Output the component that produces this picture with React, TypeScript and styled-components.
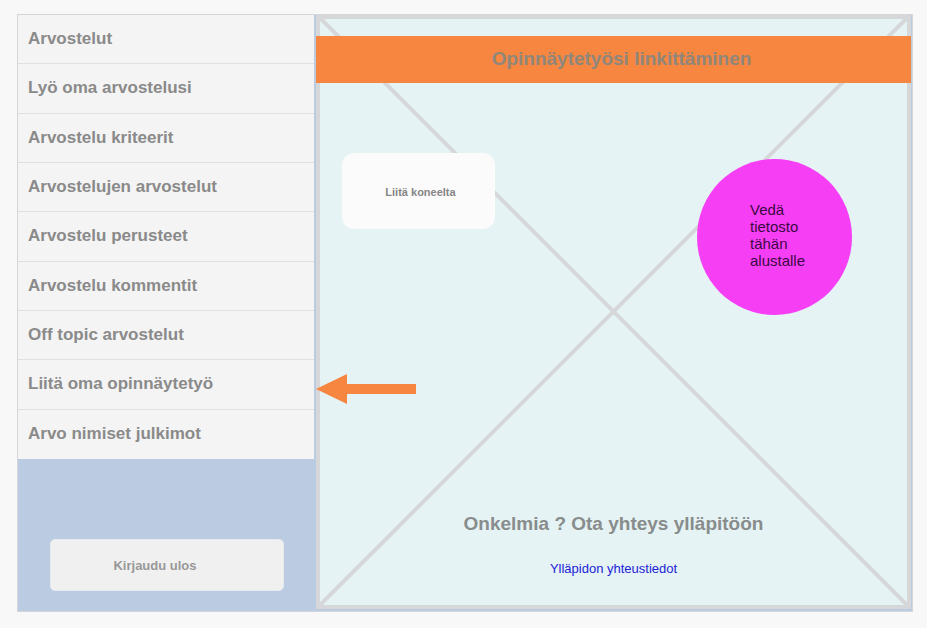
import React from "react";
import styled, { createGlobalStyle } from "styled-components";

const GlobalStyle = createGlobalStyle`
  * { box-sizing: border-box; }
  body {
    margin: 0;
    background: #f8f8f8;
    color: #868686;
    font-family: "Liberation Sans", Arial, sans-serif;
  }
  button { font-family: inherit; cursor: pointer; }
`;

const Page = styled.div`
  padding: 14px 14px 16px 17px;
`;

const Frame = styled.div`
  display: grid;
  grid-template-columns: 296px minmax(0, 1fr);
  column-gap: 2px;
  border: 1px solid #d3d7dc;
  background: #bbcce2;
`;

const Sidebar = styled.nav`
  display: flex;
  flex-direction: column;
`;

const Menu = styled.ul`
  display: grid;
  grid-auto-rows: 1fr;
  height: 444px;
  margin: 0;
  padding: 0;
  list-style: none;
  background: #f4f4f4;
`;

const MenuItem = styled.li`
  border-bottom: 1px solid #dfe0e1;

  &:last-child { border-bottom-color: #f4f4f4; }
`;

const MenuLink = styled.a`
  display: flex;
  align-items: center;
  height: 100%;
  padding: 0 10px;
  color: #8a8a8a;
  font-size: 17px;
  font-weight: bold;
  line-height: 20px;
  text-decoration: none;
`;

const LogoutButton = styled.button`
  height: 52px;
  margin: 80px 30px 20px 32px;
  padding: 0 24px 0 0;
  border: 1px solid #e6eaef;
  border-radius: 5px;
  background: #f0f0f0;
  color: #989898;
  font-size: 13px;
  font-weight: bold;
`;

const Canvas = styled.main`
  position: relative;
  display: flex;
  flex-direction: column;
  margin: -1px 1px 2px 0;
  padding: 22px 0 31px;
  background: #e5f3f5;
`;

const Backdrop = styled.svg`
  position: absolute;
  inset: 0;
  width: 100%;
  height: 100%;
`;

const Banner = styled.h1`
  position: relative;
  margin: 0;
  padding: 0 0 2px 16px;
  background: #f68640;
  color: #8f867c;
  font-size: 19px;
  line-height: 45px;
  text-align: center;
`;

const DropRow = styled.section`
  position: relative;
  display: flex;
  justify-content: space-between;
  align-items: flex-start;
  padding: 70px 59px 0 26px;
`;

const AttachButton = styled.button`
  width: 153px;
  height: 76px;
  padding: 2px 0 0 4px;
  border: 0;
  border-radius: 12px;
  background: #fbfbfb;
  color: #868686;
  font-size: 11px;
  font-weight: bold;
`;

const DropTarget = styled.div`
  width: 155px;
  height: 156px;
  margin-top: 6px;
  padding: 42px 40px 0 53px;
  border-radius: 50%;
  background: #f63ef5;
  color: #3b0a42;
  font-size: 15px;
  line-height: 17px;
`;

const Arrow = styled.svg`
  position: relative;
  display: block;
  width: 100px;
  height: 30px;
  margin-top: 59px;
`;

const Help = styled.footer`
  position: relative;
  display: flex;
  flex-direction: column;
  align-items: center;
  gap: 25px;
  padding-top: 108px;
`;

const HelpTitle = styled.h2`
  margin: 0;
  color: #888c8c;
  font-size: 19px;
  line-height: 24px;
`;

const HelpLink = styled.a`
  color: #2323d6;
  font-size: 13px;
  line-height: 16px;
  text-decoration: none;
`;

const menuItems = [
  "Arvostelut",
  "Lyö oma arvostelusi",
  "Arvostelu kriteerit",
  "Arvostelujen arvostelut",
  "Arvostelu perusteet",
  "Arvostelu kommentit",
  "Off topic arvostelut",
  "Liitä oma opinnäytetyö",
  "Arvo nimiset julkimot",
];

export default function App() {
  return (
    <>
      <GlobalStyle />
      <Page>
        <Frame>
          <Sidebar>
            <Menu>
              {menuItems.map((label) => (
                <MenuItem key={label}>
                  <MenuLink href="#">{label}</MenuLink>
                </MenuItem>
              ))}
            </Menu>
            <LogoutButton type="button">Kirjaudu ulos</LogoutButton>
          </Sidebar>
          <Canvas>
            <Backdrop viewBox="0 0 595 595" preserveAspectRatio="none" aria-hidden="true">
              <g fill="none" stroke="#d6d7d9" strokeWidth="4">
                <path d="M3 3 592 592M592 3 3 592" />
                <rect x="2" y="2" width="591" height="591" />
                <path d="M0 3H595" />
              </g>
            </Backdrop>
            <Banner>Opinnäytetyösi linkittäminen</Banner>
            <DropRow>
              <AttachButton type="button">Liitä koneelta</AttachButton>
              <DropTarget>Vedä tietosto tähän alustalle</DropTarget>
            </DropRow>
            <Arrow viewBox="0 0 100 30" aria-hidden="true">
              <path d="M0 15 31 0V10H100V20H31V30Z" fill="#f68640" />
            </Arrow>
            <Help>
              <HelpTitle>Onkelmia ? Ota yhteys ylläpitöön</HelpTitle>
              <HelpLink href="#">Ylläpidon yhteustiedot</HelpLink>
            </Help>
          </Canvas>
        </Frame>
      </Page>
    </>
  );
}
